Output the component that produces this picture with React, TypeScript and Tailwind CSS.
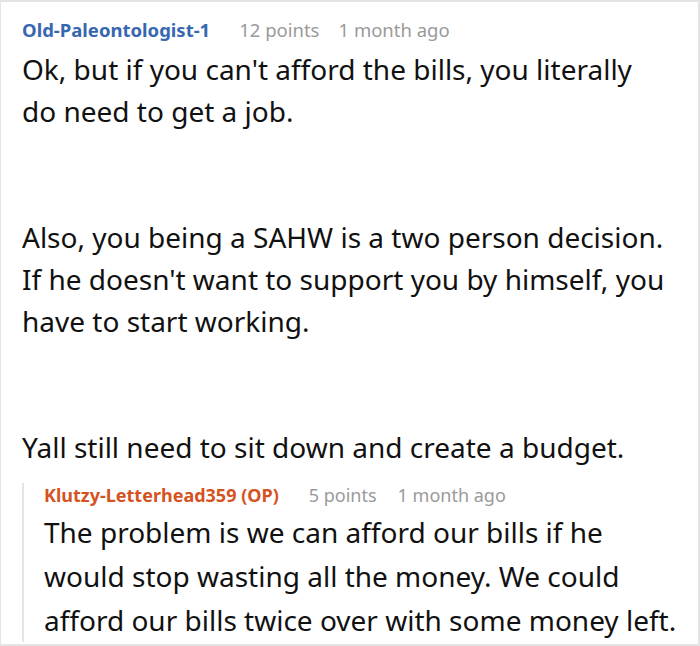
import React from 'react';

const font = { fontFamily: '"Noto Sans", "Open Sans", sans-serif' };

export default function App() {
  return (
    <div
      className="w-[700px] h-[646px] bg-white border border-[#e4e4e4] border-t-2 border-r-2 border-b-2 overflow-hidden"
      style={font}
    >
      {/* Parent comment */}
      <div className="pl-[21px] pt-[16px]">
        <div className="flex items-center h-[24px] text-[18.5px] whitespace-nowrap">
          <span className="font-bold text-[#3767b1]">Old-Paleontologist-1</span>
          <span className="ml-[29px] text-[#9a9a9a]">12 points</span>
          <span className="ml-[19px] text-[#9a9a9a]">1 month ago</span>
        </div>
        <div className="mt-[6px] text-[28px] leading-[42px] text-[#111] whitespace-nowrap">
          <p className="mb-[84px]">
            Ok, but if you can't afford the bills, you literally
            <br />
            do need to get a job.
          </p>
          <p className="mb-[84px]">
            Also, you being a SAHW is a two person decision.
            <br />
            If he doesn't want to support you by himself, you
            <br />
            have to start working.
          </p>
          <p>Yall still need to sit down and create a budget.</p>
        </div>
      </div>

      {/* Reply */}
      <div className="ml-[21px] mt-[15px] border-l-2 border-[#e4e4e4] pl-[20px]">
        <div className="flex items-center h-[24px] text-[18px] whitespace-nowrap">
          <span className="font-bold text-[#d4531f]">Klutzy-Letterhead359 (OP)</span>
          <span className="ml-[30px] text-[#9a9a9a]">5 points</span>
          <span className="ml-[21px] text-[#9a9a9a]">1 month ago</span>
        </div>
        <p className="mt-[3px] text-[28px] leading-[44px] text-[#111] whitespace-nowrap">
          The problem is we can afford our bills if he
          <br />
          would stop wasting all the money. We could
          <br />
          afford our bills twice over with some money left.
        </p>
      </div>
    </div>
  );
}
